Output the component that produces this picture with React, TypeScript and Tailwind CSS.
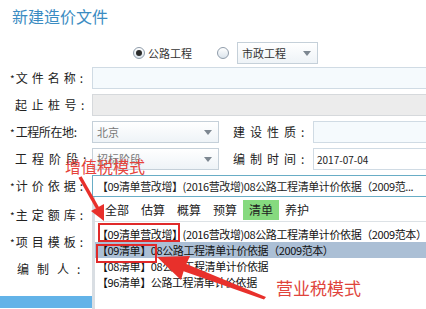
import React from 'react'

const font = "font-['Noto_Sans_CJK_SC',sans-serif]"

function Caret() {
  return (
    <svg width="8" height="5" viewBox="0 0 8 5" className="shrink-0">
      <path d="M0 0 L8 0 L4 5 Z" fill="#7d8791" />
    </svg>
  )
}

function Radio({ checked }: { checked?: boolean }) {
  return (
    <span className="flex h-[12px] w-[12px] items-center justify-center rounded-full border border-[#8f9caa] bg-gradient-to-b from-white to-[#dbe4ec]">
      {checked && <span className="h-[6px] w-[6px] rounded-full bg-[#2b2b2b]" />}
    </span>
  )
}

function Label({ text, star, track = '', pad = 'pl-[10px]', w = 'w-[92px]' }: { text: string; star?: boolean; track?: string; pad?: string; w?: string }) {
  return (
    <div className={`${w} ${pad} flex shrink-0 items-center whitespace-nowrap text-[12px] text-[#222]`}>
      {star && <span className="mr-[1px] text-[10px]">*</span>}
      <span className={track}>{text}</span>
    </div>
  )
}

function Select({ value, grey, w }: { value: string; grey?: boolean; w: string }) {
  return (
    <div className={`${w} flex h-[22px] shrink-0 items-center justify-between border border-[#c5d0d9] bg-gradient-to-b from-white to-[#eef3f7] pl-[4px] pr-[6px] text-[11px] ${grey ? 'text-[#777]' : 'text-[#333]'}`}>
      <span>{value}</span>
      <Caret />
    </div>
  )
}

const tabs = ['全部', '估算', '概算', '预算', '清单', '养护']

const items = [
  '【09清单营改增】(2016营改增)08公路工程清单计价依据（2009范本）',
  '【09清单】08公路工程清单计价依据（2009范本）',
  '【08清单】08公路工程清单计价依据',
  '【96清单】公路工程清单计价依据',
]

export default function App() {
  return (
    <div className={`relative h-[309px] w-[426px] overflow-hidden bg-white ${font}`}>
      <div className="pl-[12px] pt-[5px] text-[16px] leading-[22px] text-[#3b8cc2]">新建造价文件</div>

      <div className="mt-[15px] flex h-[22px] items-center pl-[133px] text-[11px] text-[#333]">
        <Radio checked />
        <span className="ml-[3px]">公路工程</span>
        <span className="ml-[25px]"><Radio /></span>
        <div className="ml-[8px]">
          <Select value="市政工程" w="w-[81px]" />
        </div>
      </div>

      <div className="mt-[3px] flex flex-col gap-[5px]">
        <div className="flex h-[22px]">
          <Label star text="文件名称:" track="tracking-[4px]" />
          <div className="h-[22px] w-[340px] shrink-0 border border-[#d0dbe4] bg-[#f5fafd]" />
        </div>
        <div className="flex h-[22px]">
          <Label text="起止桩号:" track="tracking-[4.5px]" pad="pl-[15px]" />
          <div className="h-[22px] w-[340px] shrink-0 border border-[#d6d9dc] bg-[#ececec]" />
        </div>
        <div className="flex h-[22px]">
          <Label star text="工程所在地:" track="tracking-[-0.4px]" />
          <Select value="北京" grey w="w-[127px]" />
          <Label text="建设性质:" track="tracking-[5px]" pad="pl-[14px]" w="w-[94px]" />
          <div className="h-[22px] w-[130px] shrink-0 border border-[#d0dbe4] bg-[#f5fafd]" />
        </div>
        <div className="flex h-[22px]">
          <Label text="工程阶段:" track="tracking-[5px]" pad="pl-[15px]" />
          <Select value="招标阶段" grey w="w-[127px]" />
          <Label text="编制时间:" track="tracking-[5px]" pad="pl-[14px]" w="w-[94px]" />
          <div className="flex h-[22px] w-[130px] shrink-0 items-center border border-[#d0dbe4] bg-white pl-[3px] text-[10px] text-[#222]">2017-07-04</div>
        </div>
        <div className="flex h-[22px]">
          <Label star text="计价依据:" track="tracking-[4px]" />
          <div className="flex h-[22px] w-[340px] shrink-0 items-center overflow-hidden whitespace-nowrap border border-[#69adc6] bg-white pl-[4px] text-[11px] tracking-[-0.4px] text-[#222]">
            【09清单营改增】(2016营改增)08公路工程清单计价依据（2009范...
          </div>
        </div>
      </div>

      <div className="flex">
        <div className="flex w-[92px] shrink-0 flex-col pt-[7px]">
          <div className="flex flex-col gap-[5px]">
            <div className="flex h-[22px]"><Label star text="主定额库:" track="tracking-[4px]" /></div>
            <div className="flex h-[22px]"><Label star text="项目模板:" track="tracking-[4px]" /></div>
            <div className="flex h-[22px]"><Label text="编制人:" track="tracking-[8px]" pad="pl-[17px]" /></div>
          </div>
          <div className="mt-[16px] h-[12px] w-[92px] bg-[#63b3e8]" />
        </div>

        <div className="h-[112px] w-[340px] shrink-0 border-l-[3px] border-[#d9dee3] bg-white">
          <div className="flex h-[25px] items-end border-b border-[#dde2e6] pb-[1px] pl-[4px] text-[12px] text-[#222]">
            {tabs.map(t => (
              <span key={t} className={`flex h-[20px] items-center px-[6px] ${t === '清单' ? 'bg-[#86da7f]' : ''}`}>{t}</span>
            ))}
          </div>
          <div className="pt-[4px] text-[11px] tracking-[-0.4px] text-[#111]">
            {items.map((it, i) => (
              <div key={it} className={`flex h-[16px] items-center whitespace-nowrap pl-[2px] ${i === 1 ? 'bg-[#abbfd5]' : ''}`}>{it}</div>
            ))}
          </div>
        </div>
      </div>

      {/* red annotations */}
      <div className="absolute left-[65px] top-[155px] text-[16px] leading-[22px] text-[#e6433b]">增值税模式</div>
      <div className="absolute left-[276px] top-[277px] text-[17px] leading-[22px] text-[#e0443c]">营业税模式</div>
      <div className="absolute left-[98px] top-[223px] h-[19px] w-[82px] border-2 border-[#e02a2a]" />
      <div className="absolute left-[96px] top-[244px] h-[19px] w-[61px] border-2 border-[#e02a2a]" />
      <svg className="absolute left-0 top-0" width="426" height="309" viewBox="0 0 426 309">
        <line x1="80" y1="177" x2="97.5" y2="208" stroke="#e8302b" strokeWidth="3.5" />
        <polygon points="104,221 91,211 104,204" fill="#e8302b" />
        <polygon points="157,257 190,256 186.4,264 266,297 264,299.5 183.6,271.3 181,280" fill="#e8302b" />
      </svg>
    </div>
  )
}
